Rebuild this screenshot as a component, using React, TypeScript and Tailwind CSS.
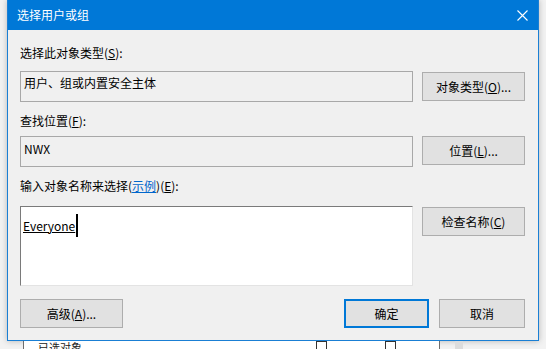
export default function App() {
  const font = { fontFamily: '"Noto Sans CJK SC", "Noto Sans", sans-serif' };

  const Btn = ({
    children,
    w,
    primary,
  }: {
    children: React.ReactNode;
    w: string;
    primary?: boolean;
  }) => (
    <div
      className={`${w} h-[29px] flex items-center justify-center bg-[#e1e1e1] text-[12px] text-black ${
        primary ? "border-2 border-[#0078d7]" : "border border-[#adadad]"
      }`}
    >
      {children}
    </div>
  );

  return (
    <div
      className="w-[546px] h-[349px] overflow-hidden bg-[#f2f2f2] leading-[16px]"
      style={font}
    >
      {/* dialog */}
      <div className="ml-[7px] w-[532px] h-[341px] border border-t-0 border-[#1a7fd4] bg-[#f0f0f0] shadow-[0_0_6px_rgba(0,0,0,0.25)] flex flex-col">
        <div className="h-[30px] bg-[#0078d7] flex items-center justify-between pl-[9px] pr-[10px] text-white text-[12px]">
          <span>选择用户或组</span>
          <svg width="11" height="11" viewBox="0 0 11 11">
            <path d="M0.5 0.5 L10.5 10.5 M10.5 0.5 L0.5 10.5" stroke="white" strokeWidth="1.1" fill="none" />
          </svg>
        </div>

        <div className="flex-1 flex flex-col pl-[12px] pr-[13px] pt-[15px] text-[12px] text-black">
          <div>
            选择此对象类型(<span className="underline">S</span>):
          </div>
          <div className="mt-[10px] flex items-start gap-[9px]">
            <div className="w-[393px] h-[31px] border border-[#a8a8a8] bg-[#f0f0f0] pl-[3px] pt-[3px]">
              用户、组或内置安全主体
            </div>
            <div className="mt-[1px]">
              <Btn w="w-[103px]">
                对象类型(<span className="underline">O</span>)...
              </Btn>
            </div>
          </div>

          <div className="mt-[11px]">
            查找位置(<span className="underline">F</span>):
          </div>
          <div className="mt-[7px] flex items-start gap-[9px]">
            <div className="w-[393px] h-[31px] border border-[#a8a8a8] bg-[#f0f0f0] pl-[3px] pt-[4px]">
              NWX
            </div>
            <Btn w="w-[103px]">
              位置(<span className="underline">L</span>)...
            </Btn>
          </div>

          <div className="mt-[11px]">
            输入对象名称来选择(
            <span className="text-[#0066cc] underline">示例</span>)(
            <span className="underline">E</span>):
          </div>
          <div className="mt-[12px] flex items-start gap-[9px]">
            <div className="w-[393px] h-[80px] bg-white border border-t-[#7a7a7a] border-l-[#7a7a7a] border-r-[#e3e3e3] border-b-[#e3e3e3] pl-[2px] pt-[7px]">
              <div className="flex items-center">
                <span className="underline">Everyone</span>
                <span className="inline-block w-[2px] h-[23px] bg-black ml-[1px]" />
              </div>
            </div>
            <div className="mt-[1px]">
              <Btn w="w-[103px]">
                检查名称(<span className="underline">C</span>)
              </Btn>
            </div>
          </div>

          <div className="mt-[13px] flex items-center">
            <Btn w="w-[103px]">
              高级(<span className="underline">A</span>)...
            </Btn>
            <div className="flex-1" />
            <Btn w="w-[85px]" primary>
              确定
            </Btn>
            <div className="w-[10px]" />
            <Btn w="w-[86px]">取消</Btn>
          </div>
        </div>
      </div>

      {/* window behind */}
      <div className="flex h-[8px]">
        <div className="w-[23px]" />
        <div className="w-[417px] bg-white border-l border-r border-[#6d6d6d] flex items-start">
          <div className="ml-[14px] h-[8px] overflow-hidden text-[11px] text-[#222] leading-[12px]">
            已选对象
          </div>
          <div className="flex-1" />
          <div className="w-[11px] h-[8px] border border-b-0 border-[#333]" />
          <div className="w-[58px]" />
          <div className="w-[11px] h-[8px] border border-b-0 border-[#333]" />
          <div className="w-[43px]" />
        </div>
        <div className="w-[15px]" />
        <div className="w-[8px] bg-[#dcdcdc]" />
      </div>
    </div>
  );
}
